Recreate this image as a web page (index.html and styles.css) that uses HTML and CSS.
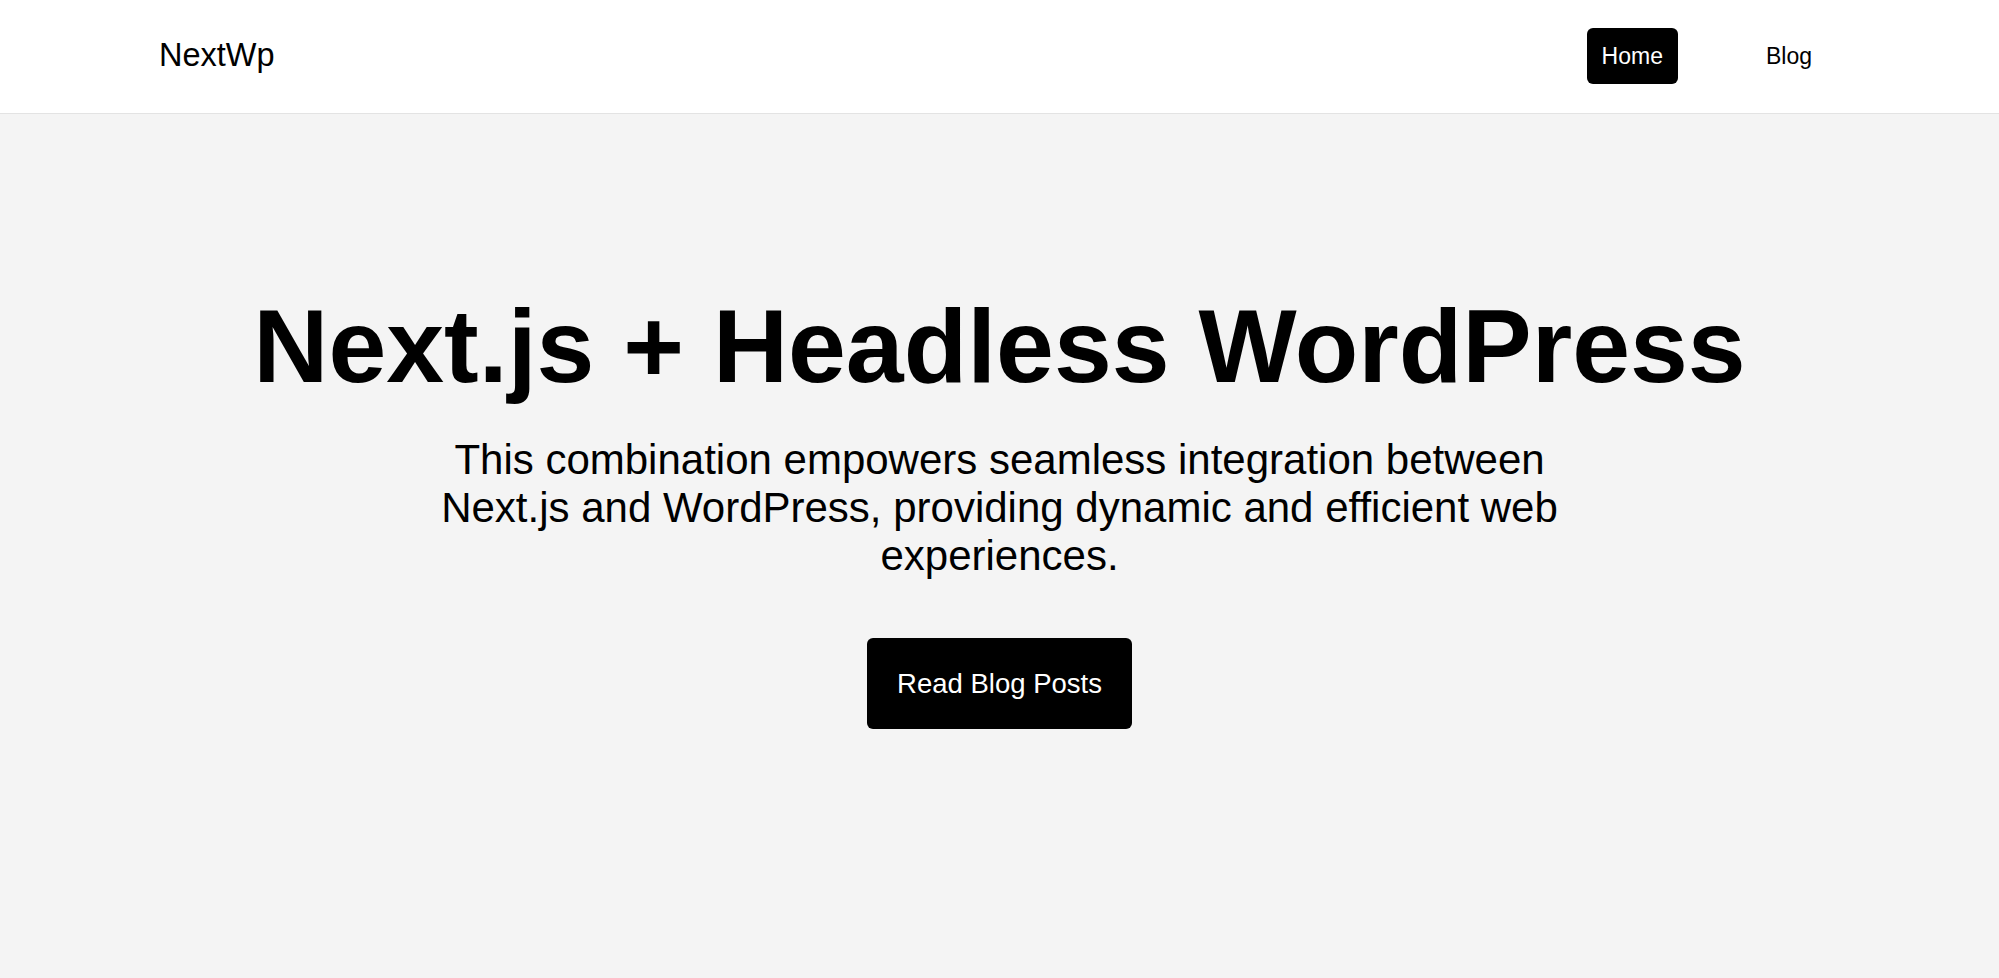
FILE: index.html
```html
<!DOCTYPE html>
<html lang="en">
<head>
<meta charset="utf-8">
<title>NextWp</title>
<link rel="stylesheet" href="styles.css">
</head>
<body>
<header class="site-header">
  <a class="logo" href="#">NextWp</a>
  <nav class="nav">
    <a class="nav-link active" href="#">Home</a>
    <a class="nav-link" href="#">Blog</a>
  </nav>
</header>
<main class="hero">
  <h1 class="hero-title">Next.js + Headless WordPress</h1>
  <p class="hero-text">This combination empowers seamless integration between Next.js and WordPress, providing dynamic and efficient web experiences.</p>
  <a class="hero-button" href="#">Read Blog Posts</a>
</main>
</body>
</html>
```
FILE: styles.css
```css
* { box-sizing: border-box; }
html, body { margin: 0; padding: 0; }
body {
  font-family: "Liberation Sans", Arial, Helvetica, sans-serif;
  color: #000;
  background: #f4f4f4;
  min-height: 978px;
}
a { text-decoration: none; color: inherit; }

.site-header {
  height: 114px;
  background: #fff;
  border-bottom: 1px solid #e3e3e3;
  display: flex;
  align-items: center;
  justify-content: space-between;
  padding: 0 172px 2px 159px;
}
.logo {
  font-size: 32.5px;
  line-height: 1;
}
.nav {
  display: flex;
  align-items: center;
  gap: 73px;
}
.nav-link {
  font-size: 23px;
  line-height: 56px;
  height: 56px;
  padding: 0 15px;
  border-radius: 6px;
}
.nav-link.active {
  background: #000;
  color: #fff;
}

.hero {
  display: flex;
  flex-direction: column;
  align-items: center;
  padding-top: 180px;
  text-align: center;
}
.hero-title {
  margin: 0;
  font-size: 104px;
  line-height: 1;
  font-weight: 700;
  letter-spacing: 0;
}
.hero-text {
  margin: 38px 0 0;
  max-width: 1170px;
  font-size: 42px;
  line-height: 48px;
  font-weight: 300;
}
.hero-button {
  margin-top: 58px;
  display: inline-flex;
  align-items: center;
  justify-content: center;
  height: 91px;
  padding: 0 30px;
  background: #000;
  color: #fff;
  border-radius: 6px;
  font-size: 27.5px;
}
```
